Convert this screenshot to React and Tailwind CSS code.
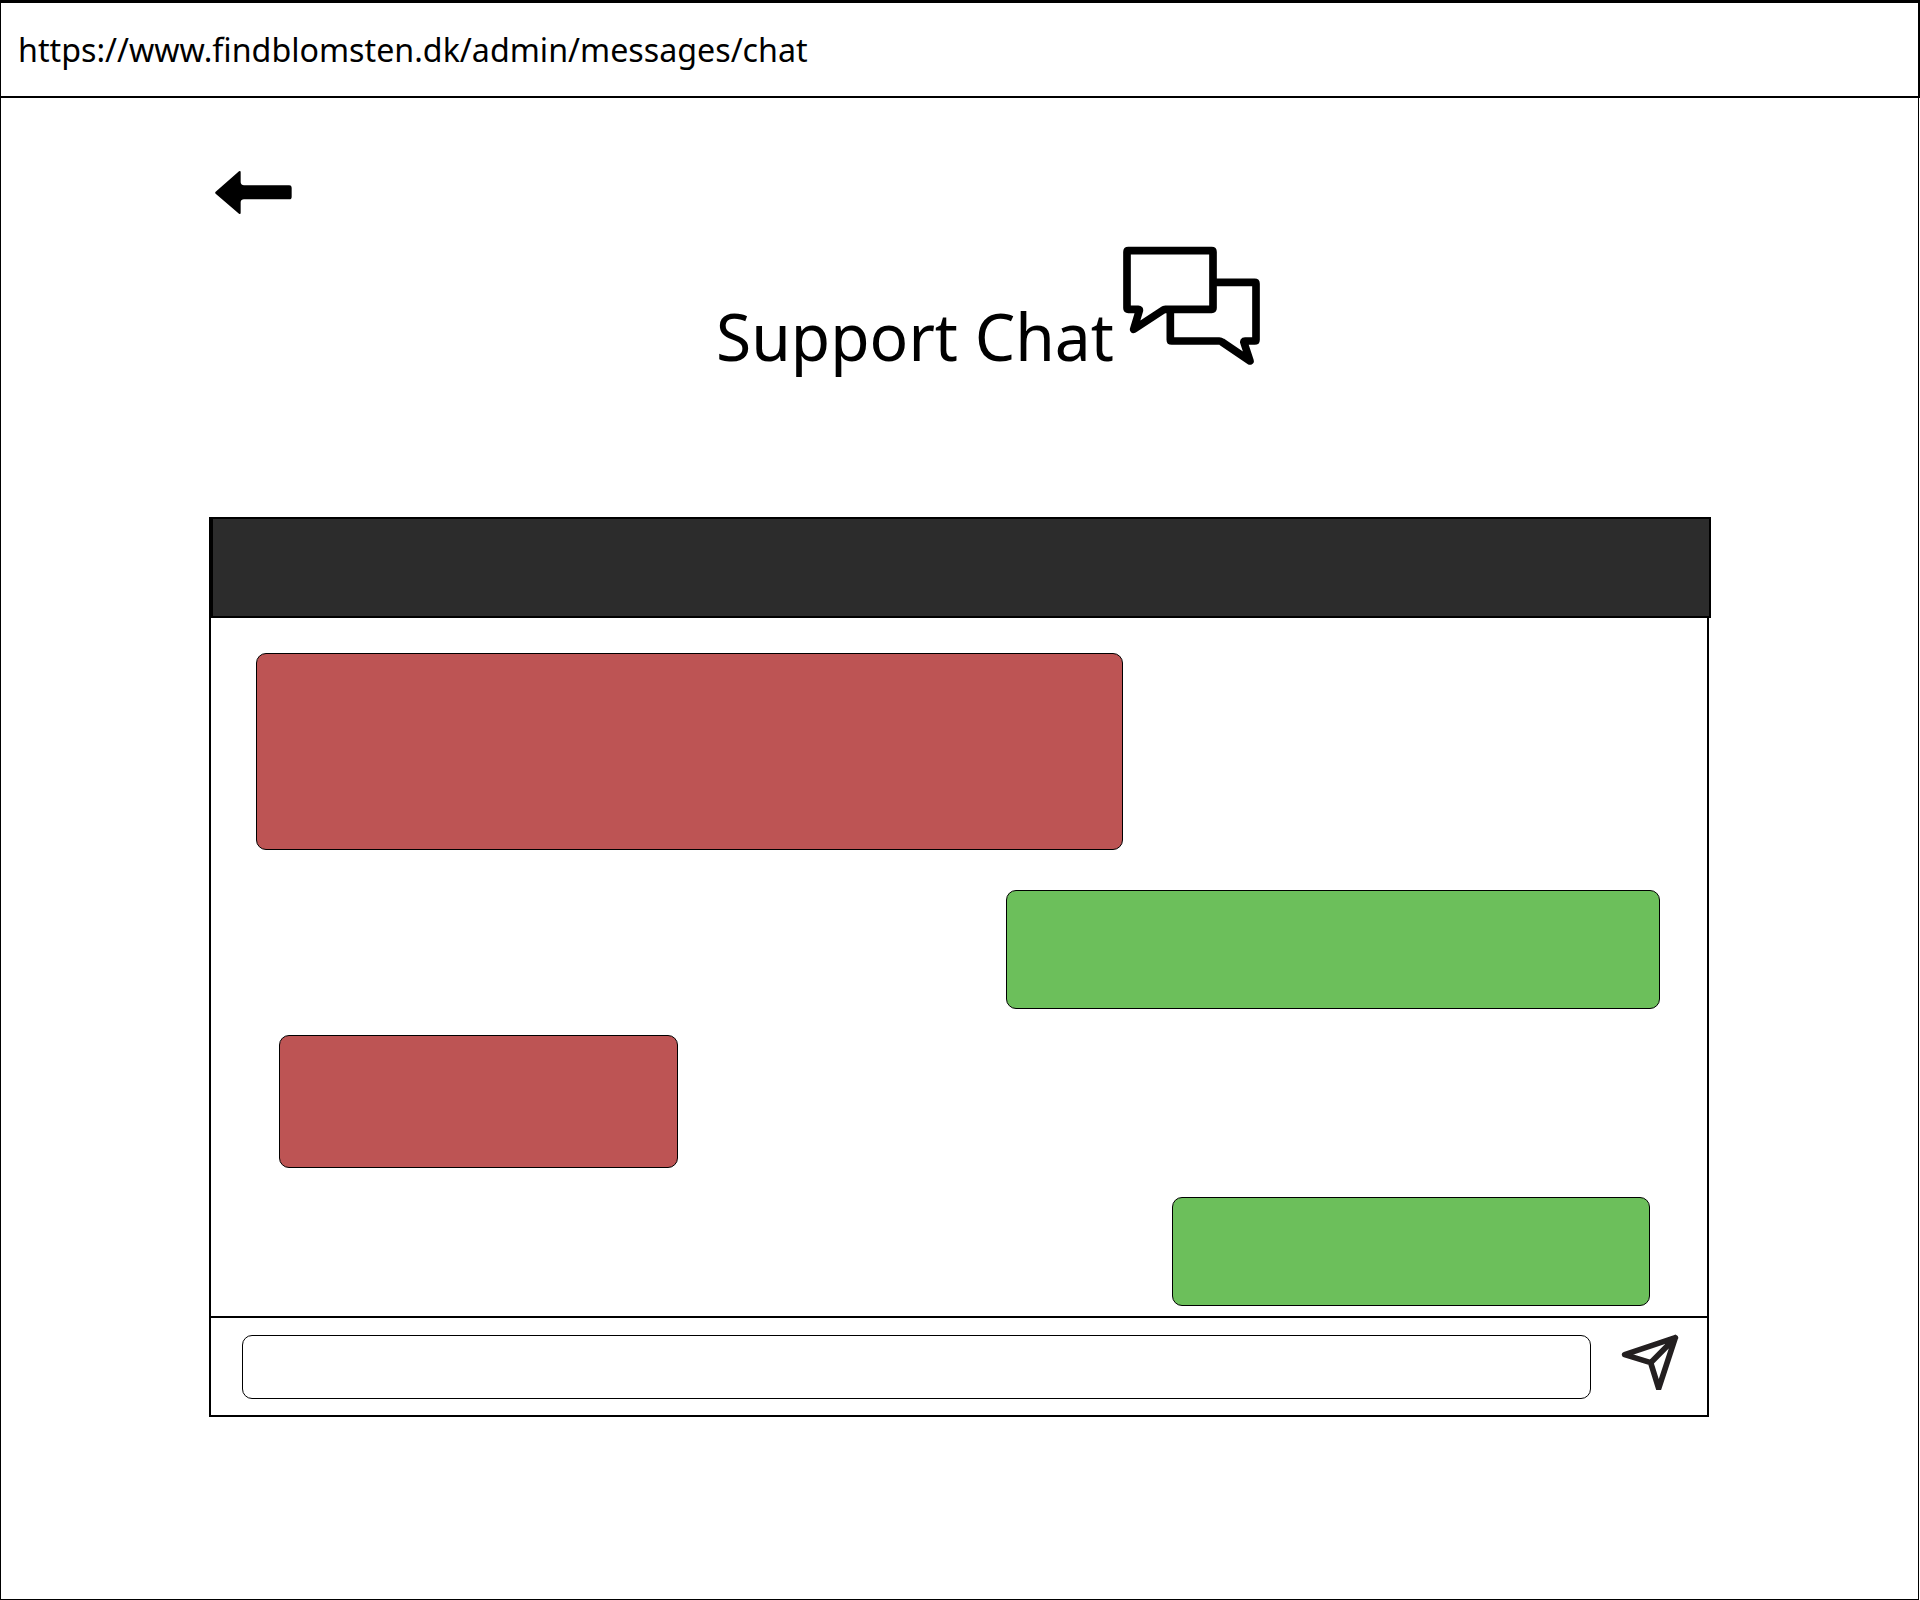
const BackArrow = () => (
  <svg className="block h-[65px] w-[110px]" viewBox="0 0 330 195">
    <path
      d="M47 95 L117 34 Q122 31 122 37 V67 Q123 76 132 76 H268 Q275 76 275 83 V110 Q275 118 268 118 H132 Q123 118 122 126 V158 Q122 164 117 161 L47 101 Q44 98 47 95 Z"
      fill="#000"
    />
  </svg>
);

const ChatBubbles = () => (
  <svg
    className="block h-[140px] w-[160px] shrink-0"
    viewBox="0 0 480 420"
    fill="none"
    stroke="#000"
    strokeWidth="23"
    strokeLinejoin="round"
  >
    <path d="M55 44 H305 Q309 44 309 48 V216 Q309 220 305 220 H166 Q162 220 158 223 L71 280 L88 224 Q89 220 85 220 H55 Q51 220 51 216 V48 Q51 44 55 44 Z" />
    <path d="M315 139 H434 Q438 139 438 143 V311 Q438 315 434 315 H405 Q400 315 402 320 L420 375 L336 318 Q332 315 328 315 H185 Q181 315 181 311 V225" />
  </svg>
);

const SendIcon = () => (
  <svg
    className="block h-[60px] w-[60px]"
    viewBox="90 120 180 180"
    fill="none"
    stroke="#231f20"
    strokeWidth="17"
    strokeLinejoin="round"
    strokeLinecap="round"
  >
    <path d="M256 143 L104 194 L182 218 L206 295 Z M182 218 L256 143" />
  </svg>
);

const messages = [
  { id: 1, look: "ml-[45px] mt-[35px] h-[197px] w-[867px] bg-[#bd5454]" },
  { id: 2, look: "ml-[795px] mt-10 h-[119px] w-[654px] bg-[#6cbf5b]" },
  { id: 3, look: "ml-[68px] mt-[26px] h-[133px] w-[399px] bg-[#bd5454]" },
  { id: 4, look: "ml-[961px] mt-[29px] h-[109px] w-[478px] bg-[#6cbf5b]" },
];

export default function App() {
  return (
    <div className="flex h-[1600px] w-[1920px] flex-col overflow-hidden bg-white font-['Noto_Sans',sans-serif] text-black">
      <header className="flex h-[98px] shrink-0 items-center border-t-3 border-r-2 border-b-2 border-l border-black pl-[17px]">
        <span className="origin-left scale-x-[0.976] text-[33px] leading-none whitespace-nowrap">
          https://www.findblomsten.dk/admin/messages/chat
        </span>
      </header>

      <main className="mr-px flex grow flex-col border-r border-b border-l border-black pl-[208px]">
        <button className="-ml-[9px] mt-[62px] w-[110px]" aria-label="Back">
          <BackArrow />
        </button>

        <div className="mt-[11px] ml-[507px] flex h-[140px] items-start">
          <h1 className="mt-[49px] w-[394px] origin-left scale-x-[0.971] text-[66px] leading-[100px] font-normal whitespace-nowrap">
            Support Chat
          </h1>
          <ChatBubbles />
        </div>

        <section className="mt-[141px] flex h-[900px] w-[1502px] flex-col">
          <div className="h-[101px] shrink-0 border-2 border-l-4 border-black bg-[#2c2c2c]" />
          <div className="flex w-[1500px] grow flex-col border-x-2 border-b-2 border-black">
            <div className="h-[700px] border-b-2 border-black">
              {messages.map((m) => (
                <div key={m.id} className={`rounded-[10px] border border-black ${m.look}`} />
              ))}
            </div>
            <form className="flex grow items-start pl-[31px]">
              <input
                aria-label="Message"
                className="mt-[17px] h-16 w-[1349px] rounded-[10px] border border-black bg-white px-4 text-2xl outline-none"
              />
              <button type="button" aria-label="Send" className="mt-3 ml-[29px]">
                <SendIcon />
              </button>
            </form>
          </div>
        </section>
      </main>
    </div>
  );
}
